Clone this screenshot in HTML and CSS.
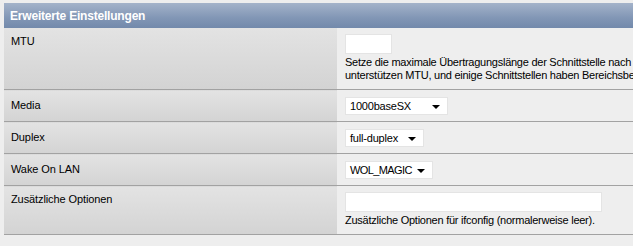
FILE: index.html
```html
<!DOCTYPE html>
<html lang="de">
<head>
    <meta charset="UTF-8">
    <title>Erweiterte Einstellungen</title>
    <link rel="stylesheet" href="styles.css">
</head>
<body>
    <!--Erweiterte Einstellungen-->
    <table class="tabcont">
        <tr>
            <td colspan="2" class="listtopic">Erweiterte Einstellungen</td>
        </tr>
        <tr>
            <td class="vncell">MTU</td>
            <td class="vtable">
                <input type="text" class="formfld short">
                <div class="hint">Setze die maximale Übertragungslänge der Schnittstelle nach Bedarf. Nicht alle Schnittstellen<br>unterstützen MTU, und einige Schnittstellen haben Bereichsbeschränkungen.</div>
            </td>
        </tr>
        <tr>
            <td class="vncell mid">Media</td>
            <td class="vtable sel">
                <span class="selwrap" style="width:103px">1000baseSX</span>
            </td>
        </tr>
        <tr>
            <td class="vncell mid">Duplex</td>
            <td class="vtable sel">
                <span class="selwrap" style="width:79px">full-duplex</span>
            </td>
        </tr>
        <tr>
            <td class="vncell mid">Wake On LAN</td>
            <td class="vtable sel">
                <span class="selwrap caps" style="width:88px">WOL_MAGIC</span>
            </td>
        </tr>
        <tr>
            <td class="vncell">Zusätzliche Optionen</td>
            <td class="vtable">
                <input type="text" class="formfld long">
                <div class="hint">Zusätzliche Optionen für ifconfig (normalerweise leer).</div>
            </td>
        </tr>
    </table>
</body>
</html>
```
FILE: styles.css
```css
*{
    margin:0;
    padding:0;
    box-sizing:border-box;
}
html, body{
    background-color:#eeeeee;
    overflow:hidden;
}
body{
    padding:3px 0 0 4px;
    font-family:Tahoma, "Liberation Sans", "DejaVu Sans", sans-serif;
    font-size:11px;
    letter-spacing:-0.1px;
    color:#000;
}
/*Tabelle*/
.tabcont{
    width:1000px;
    border-collapse:collapse;
}
/*Kopfzeile*/
.listtopic{
    height:25px;
    padding:0 6px;
    background:linear-gradient(#a4b3ca, #8196b5 60%, #7289ab);
    color:#fff;
    font-weight:bold;
    font-size:12px;
    letter-spacing:-0.2px;
    vertical-align:middle;
}
/*linke Spalte*/
.vncell{
    width:333px;
    padding:7px 7px;
    vertical-align:top;
    background:linear-gradient(#e3e3e3, #d3d3d3);
    border-bottom:1px solid #a2a2a2;
    line-height:13px;
}
.vncell.mid{
    vertical-align:middle;
}
/*rechte Spalte*/
.vtable{
    padding:6px 8px 7px;
    vertical-align:top;
    background-color:#eeeeee;
    border-bottom:1px solid #a2a2a2;
}
.vtable.sel{
    padding:7px 8px 6px;
}
.formfld{
    display:block;
    height:20px;
    border:1px solid #e4e4e4;
    background-color:#fff;
    margin-bottom:2px;
}
.short{
    width:47px;
}
.long{
    width:257px;
}
.hint{
    line-height:13px;
    white-space:nowrap;
    letter-spacing:-0.25px;
}
/*Auswahlliste*/
.selwrap{
    display:block;
    position:relative;
    height:18px;
    line-height:16px;
    padding-left:4px;
    background-color:#fff;
    border:1px solid #e4e4e4;
    overflow:hidden;
    letter-spacing:-0.2px;
}
.selwrap.caps{
    letter-spacing:-0.6px;
}
.selwrap::after{
    content:"";
    position:absolute;
    right:7px;
    top:7px;
    border-left:4px solid transparent;
    border-right:4px solid transparent;
    border-top:4px solid #000;
}
```
